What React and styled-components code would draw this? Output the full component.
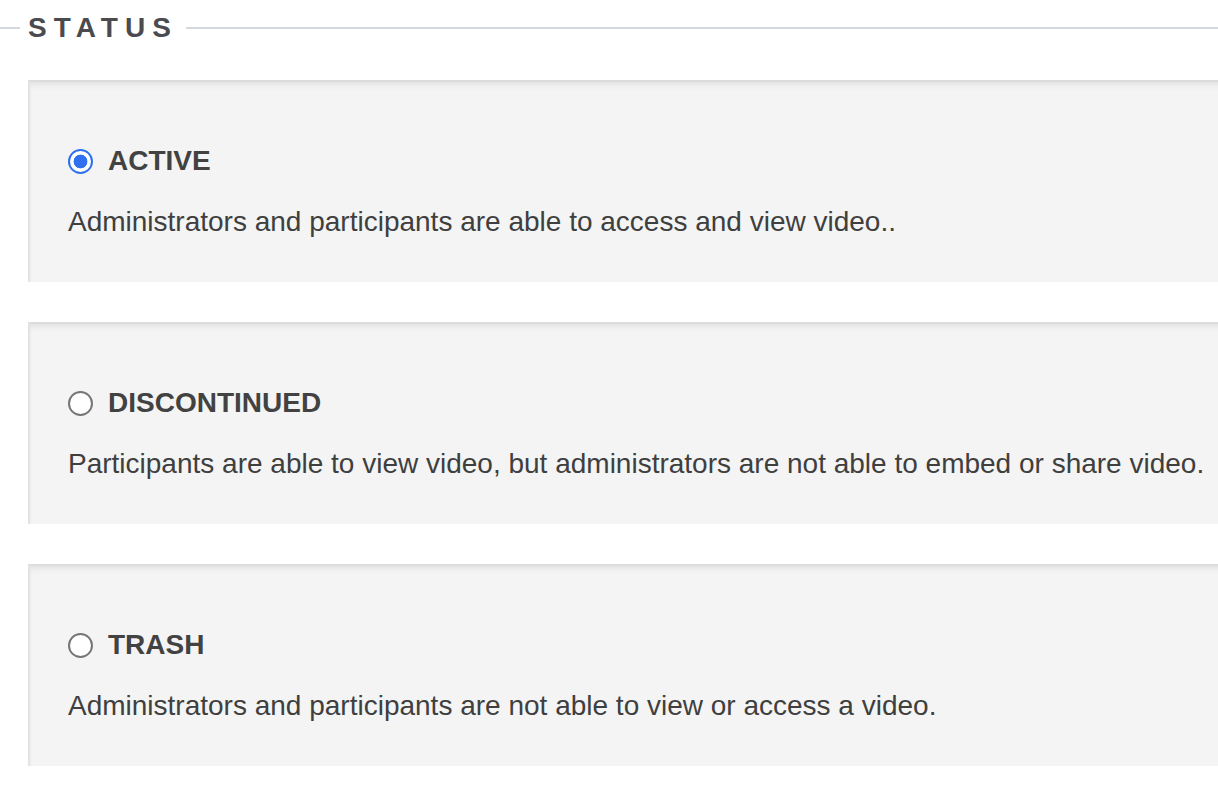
import React, { useState } from "react";
import styled, { createGlobalStyle } from "styled-components";

const GlobalStyle = createGlobalStyle`
  html, body {
    margin: 0;
    padding: 0;
    background: #ffffff;
    overflow: hidden;
  }
  body {
    font-family: "Liberation Sans", Arial, Helvetica, sans-serif;
    color: #404040;
  }
`;

const Page = styled.div`
  width: 1218px;
  height: 792px;
  overflow: hidden;
`;

const Legend = styled.div`
  display: flex;
  align-items: center;
  height: 56px;

  &::before,
  &::after {
    content: "";
    height: 2px;
    background: #d5d8dc;
  }
  &::before {
    width: 20px;
  }
  &::after {
    flex: 1;
  }
`;

const LegendText = styled.h2`
  margin: 0;
  padding: 0 8px 0 8px;
  font-size: 28px;
  font-weight: 700;
  letter-spacing: 7px;
  line-height: 1;
  color: #4a4a4f;
`;

const Options = styled.div`
  display: flex;
  flex-direction: column;
  gap: 40px;
  margin-top: 24px;
  margin-left: 28px;
`;

const Card = styled.label`
  display: flex;
  flex-direction: column;
  box-sizing: border-box;
  width: 1260px;
  height: 202px;
  padding: 62px 0 0 38px;
  background: #f4f4f4;
  border-top: 2px solid #dcdcdc;
  border-left: 2px solid #e3e3e3;
  box-shadow: inset 0 5px 7px -3px rgba(0, 0, 0, 0.09);
  cursor: pointer;
`;

const Row = styled.div`
  display: flex;
  align-items: center;
  gap: 15px;
  height: 34px;
`;

const Radio = styled.input.attrs({ type: "radio" })`
  appearance: none;
  margin: 0;
  box-sizing: border-box;
  width: 25px;
  height: 25px;
  border-radius: 50%;
  background: #ffffff;
  border: 2px solid #767676;
  cursor: pointer;

  &:checked {
    border: 2.5px solid #2f6ff0;
    background: radial-gradient(circle, #2f6ff0 0 6.6px, #ffffff 7.2px);
  }
`;

const Title = styled.span`
  font-size: 28px;
  font-weight: 700;
  color: #424242;
  line-height: 1.2;
`;

const Description = styled.p`
  margin: 27px 0 0 0;
  font-size: 28px;
  line-height: 1.2;
  color: #3f3f3f;
  white-space: nowrap;
`;

const statuses = [
  {
    id: "active",
    title: "ACTIVE",
    text: "Administrators and participants are able to access and view video..",
  },
  {
    id: "discontinued",
    title: "DISCONTINUED",
    text: "Participants are able to view video, but administrators are not able to embed or share video.",
  },
  {
    id: "trash",
    title: "TRASH",
    text: "Administrators and participants are not able to view or access a video.",
  },
];

export default function App() {
  const [status, setStatus] = useState("active");

  return (
    <Page>
      <GlobalStyle />
      <Legend>
        <LegendText>STATUS</LegendText>
      </Legend>
      <Options>
        {statuses.map((s) => (
          <Card key={s.id}>
            <Row>
              <Radio
                name="status"
                value={s.id}
                checked={status === s.id}
                onChange={() => setStatus(s.id)}
              />
              <Title>{s.title}</Title>
            </Row>
            <Description>{s.text}</Description>
          </Card>
        ))}
      </Options>
    </Page>
  );
}
